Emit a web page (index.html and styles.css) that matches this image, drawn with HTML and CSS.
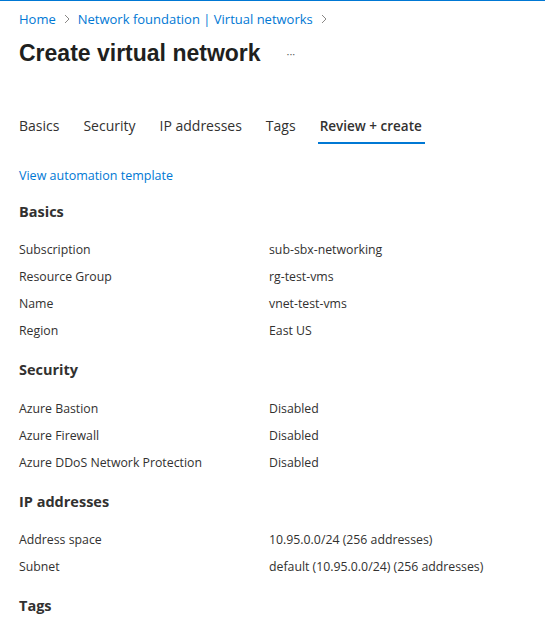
FILE: index.html
```html
<!DOCTYPE html>
<html lang="en">
<head>
<meta charset="utf-8">
<title>Create virtual network</title>
<link rel="stylesheet" href="styles.css">
</head>
<body>
<div class="page">
  <nav class="crumbs">
    <a class="crumb" href="#">Home</a>
    <span class="chev"><svg width="8" height="12" viewBox="0 0 8 12"><path d="M2 2 L6 6 L2 10" fill="none" stroke="#8a8886" stroke-width="1"/></svg></span>
    <a class="crumb" href="#">Network foundation | Virtual networks</a>
    <span class="chev"><svg width="8" height="12" viewBox="0 0 8 12"><path d="M2 2 L6 6 L2 10" fill="none" stroke="#8a8886" stroke-width="1"/></svg></span>
  </nav>
  <div class="titlebar">
    <h1 class="title">Create virtual network</h1>
    <span class="more">···</span>
  </div>
  <div class="tabs">
    <span class="tab">Basics</span>
    <span class="tab">Security</span>
    <span class="tab">IP addresses</span>
    <span class="tab">Tags</span>
    <span class="tab active">Review + create</span>
  </div>
  <a class="link" href="#">View automation template</a>

  <section class="sec">
    <h2 class="head">Basics</h2>
    <div class="row"><span class="k">Subscription</span><span class="v">sub-sbx-networking</span></div>
    <div class="row"><span class="k">Resource Group</span><span class="v">rg-test-vms</span></div>
    <div class="row"><span class="k">Name</span><span class="v">vnet-test-vms</span></div>
    <div class="row"><span class="k">Region</span><span class="v">East US</span></div>
  </section>

  <section class="sec">
    <h2 class="head">Security</h2>
    <div class="row"><span class="k">Azure Bastion</span><span class="v">Disabled</span></div>
    <div class="row"><span class="k">Azure Firewall</span><span class="v">Disabled</span></div>
    <div class="row"><span class="k">Azure DDoS Network Protection</span><span class="v">Disabled</span></div>
  </section>

  <section class="sec">
    <h2 class="head">IP addresses</h2>
    <div class="row"><span class="k">Address space</span><span class="v">10.95.0.0/24 (256 addresses)</span></div>
    <div class="row"><span class="k">Subnet</span><span class="v">default (10.95.0.0/24) (256 addresses)</span></div>
  </section>

  <section class="sec">
    <h2 class="head">Tags</h2>
  </section>
</div>
</body>
</html>
```

FILE: styles.css
```css
html, body {
  margin: 0;
  padding: 0;
  background: #ffffff;
}
body {
  border-top: 1px solid #0078d4;
  font-family: "Open Sans", "Noto Sans", sans-serif;
  color: #323130;
}
.page {
  padding: 8px 19px 0 19px;
}
.crumbs {
  display: flex;
  align-items: center;
  gap: 7px;
  height: 20px;
  font-size: 13px;
  line-height: 20px;
}
.crumb {
  color: #0078d4;
  text-decoration: none;
}
.chev {
  display: flex;
  align-items: center;
}
.titlebar {
  display: flex;
  align-items: center;
  margin-top: 8px;
  height: 32px;
}
.title {
  margin: 0;
  font-family: "Liberation Sans", Arial, sans-serif;
  font-weight: 700;
  font-size: 23px;
  line-height: 32px;
  color: #201f1e;
}
.more {
  margin-left: 26px;
  font-size: 11px;
  color: #605e5c;
}
.tabs {
  display: flex;
  gap: 24px;
  margin-top: 47px;
}
.tab {
  font-size: 14px;
  line-height: 20px;
  padding: 0 0 6px 0;
  border-bottom: 2px solid transparent;
}
.tab.active {
  border-bottom-color: #0078d4;
  font-size: 13.5px;
  font-weight: 600;
  margin-left: -2px;
  padding: 0 3px 6px 2px;
}
.link {
  display: block;
  margin-top: 22px;
  font-size: 12.5px;
  line-height: 20px;
  color: #0078d4;
  text-decoration: none;
}
.sec {
  margin-top: 14.5px;
}
.head {
  margin: 0 0 14px 0;
  font-size: 14.5px;
  font-weight: 700;
  line-height: 22px;
  color: #323130;
}
.row {
  display: grid;
  grid-template-columns: 250px 1fr;
  height: 27px;
  align-items: center;
  font-size: 12.3px;
  line-height: 20px;
}
```
